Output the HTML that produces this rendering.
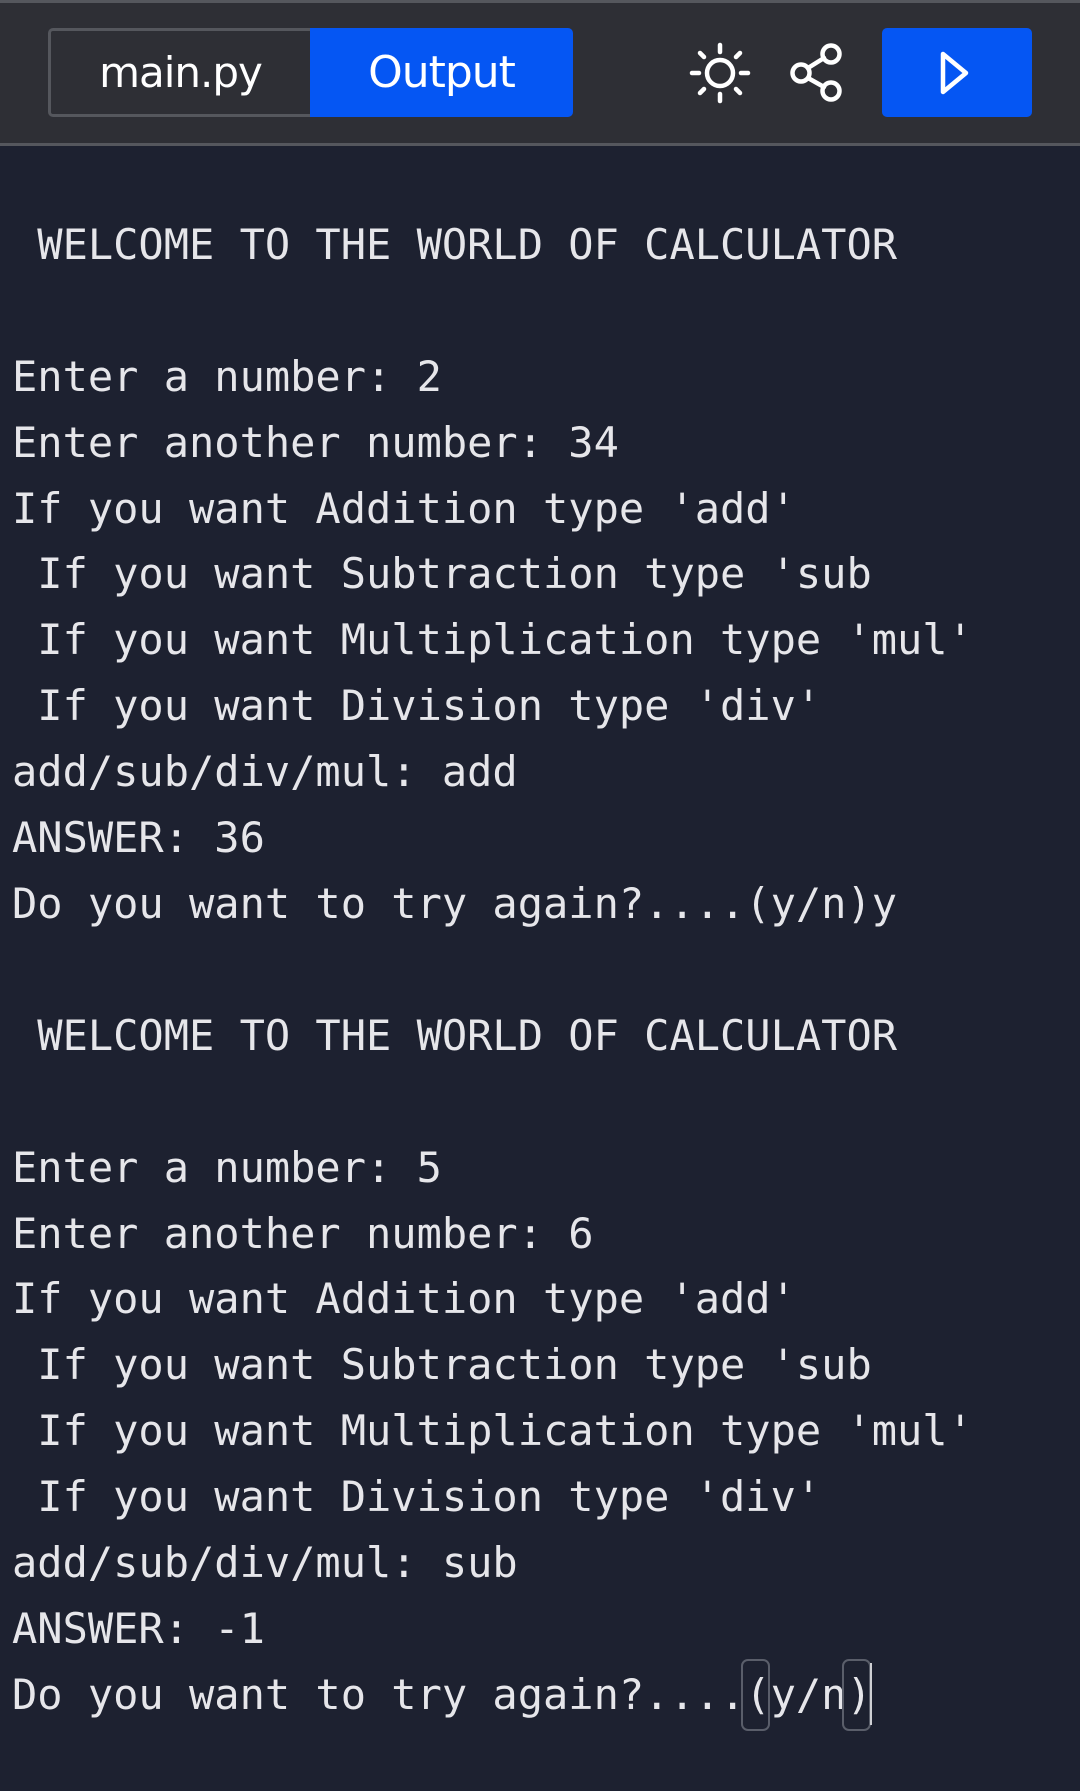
<!DOCTYPE html>
<html><head><meta charset="utf-8"><style>
html,body{margin:0;padding:0;background:#1d2130;width:1080px;height:1791px;overflow:hidden}
.hdr{position:absolute;left:0;top:0;width:1080px;height:146px;background:#2e2f35;border-top:3px solid #55575d;border-bottom:3px solid #55575d;box-sizing:border-box}
.tab1{position:absolute;left:48px;top:25px;width:262px;height:89px;box-sizing:border-box;border:3px solid #55575d;border-right:none;border-radius:5px 0 0 5px;color:#fff;font:42px "DejaVu Sans","Liberation Sans",sans-serif;letter-spacing:-1px;display:flex;align-items:center;justify-content:center}
.tab2{position:absolute;left:310px;top:25px;width:263px;height:89px;background:#0556f3;border-radius:0 5px 5px 0;color:#fff;font:44px "DejaVu Sans","Liberation Sans",sans-serif;letter-spacing:-1px;display:flex;align-items:center;justify-content:center}
.run{position:absolute;left:882px;top:25px;width:150px;height:89px;background:#0556f3;border-radius:5px}
pre{position:absolute;left:12px;top:146px;margin:0;font:42px "DejaVu Sans Mono",monospace;line-height:65.9px;color:#e6e6ea}
.b{position:absolute;border:2.5px solid #5a5e6a;border-radius:7px;box-sizing:border-box}
</style></head><body>
<div class="hdr">
<div class="tab1">main.py</div>
<div class="tab2">Output</div>
<div class="run"></div>
<svg style="position:absolute;left:0;top:-3px" width="1080" height="140">
<g stroke="#fff" stroke-width="4.5" fill="none" stroke-linecap="round">
<circle cx="720" cy="73" r="13"/>
<line x1="720" y1="45" x2="720" y2="52"/><line x1="720" y1="94" x2="720" y2="101"/>
<line x1="692" y1="73" x2="699" y2="73"/><line x1="741" y1="73" x2="748" y2="73"/>
<line x1="700" y1="53" x2="704" y2="57"/><line x1="736" y1="89" x2="740" y2="93"/>
<line x1="740" y1="53" x2="736" y2="57"/><line x1="704" y1="89" x2="700" y2="93"/>
<circle cx="801" cy="73" r="8.5"/><circle cx="831" cy="54" r="8.5"/><circle cx="831" cy="91" r="8.5"/>
<line x1="808" y1="68" x2="824" y2="58"/><line x1="808" y1="78" x2="824" y2="87"/>
</g>
<path d="M943 54 L966 73 L943 92 Z" fill="none" stroke="#fff" stroke-width="4.5" stroke-linejoin="round"/>
</svg>
</div>
<pre>

 WELCOME TO THE WORLD OF CALCULATOR

Enter a number: 2
Enter another number: 34
If you want Addition type 'add'
 If you want Subtraction type 'sub
 If you want Multiplication type 'mul'
 If you want Division type 'div'
add/sub/div/mul: add
ANSWER: 36
Do you want to try again?....(y/n)y

 WELCOME TO THE WORLD OF CALCULATOR

Enter a number: 5
Enter another number: 6
If you want Addition type 'add'
 If you want Subtraction type 'sub
 If you want Multiplication type 'mul'
 If you want Division type 'div'
add/sub/div/mul: sub
ANSWER: -1
Do you want to try again?....(y/n)</pre>
<div class="b" style="left:741px;top:1659px;width:29px;height:72px"></div>
<div class="b" style="left:842px;top:1659px;width:29px;height:72px"></div>
<div style="position:absolute;left:870px;top:1663px;width:2px;height:62px;background:#cfd0d4"></div>
</body></html>
